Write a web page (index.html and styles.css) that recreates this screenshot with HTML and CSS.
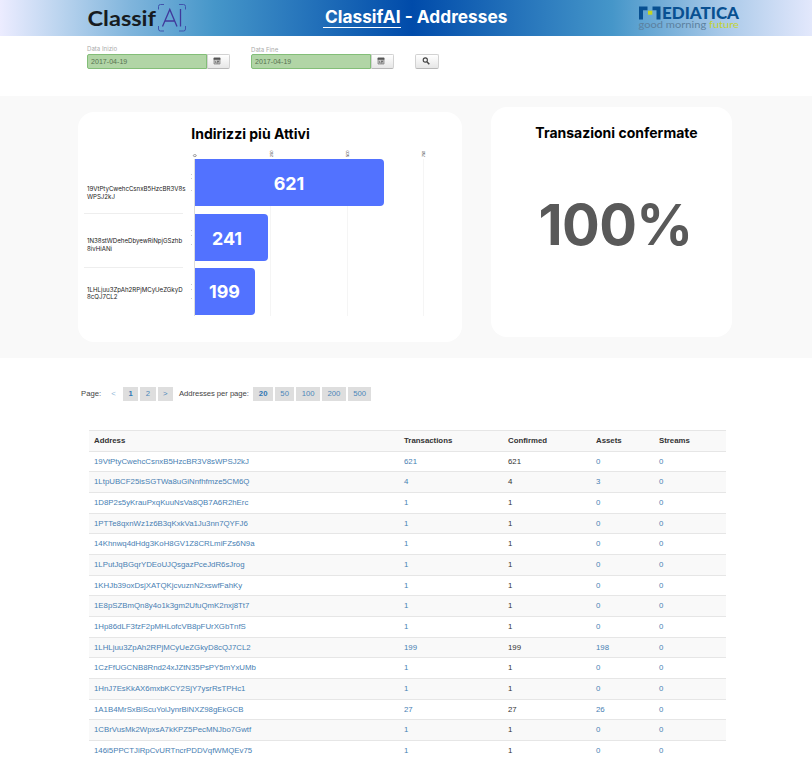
FILE: index.html
```html
<!DOCTYPE html>
<html lang="it">
<head>
<meta charset="utf-8">
<title>ClassifAI - Addresses</title>
<link rel="stylesheet" href="styles.css">
</head>
<body>
<header class="topbar">
  <svg class="logo" width="102" height="36" viewBox="0 0 102 36" role="img" aria-label="ClassifAI">
    <text class="logo-word" x="0.500" y="26.200" textLength="68.500" lengthAdjust="spacingAndGlyphs">Classif</text>
    <g fill="none" stroke="#4054ad" stroke-width="1">
      <path d="M77 4.500h-3.500q-2 0-2 2v3M92 4.500h4.500q2 0 2 2v3M71.500 26v3q0 2 2 2H77M98.500 26v3q0 2-2 2H92"/>
      <path d="M75.500 26.500L82.800 9.500L90 26.500M77.800 21h10M93.500 9v17.500" stroke="#40399b" stroke-width="1.300"/>
    </g>
  </svg>
  <h1 class="page-title"><a href="#">ClassifAI</a> - Addresses</h1>
  <svg class="partner" width="106" height="36" viewBox="0 0 106 36" role="img" aria-label="Mediatica good morning future">
    <path d="M2 19.500V6.500H10.500V10.300H6V19.500ZM15.500 6.500H23.500V19.500H19.500V10.300H15.500Z" fill="#085091"/>
    <rect x="11" y="10.700" width="4.300" height="4" fill="#c5d51f"/>
    <text class="partner-word" x="25" y="19.300" textLength="77" lengthAdjust="spacingAndGlyphs">EDIATICA</text>
    <text class="partner-tag" x="1.500" y="27.500" textLength="100.500" lengthAdjust="spacingAndGlyphs">good morning <tspan class="lime">future</tspan></text>
  </svg>
</header>

<form class="filters">
  <div class="field">
    <label>Data Inizio</label>
    <div class="input-group"><span class="date">2017-04-19</span><span class="btn"><svg class="ico" viewBox="0 0 8 8"><path d="M1 1h6v6H1z" fill="#c5c5c5" stroke="#777" stroke-width=".7"/><path d="M.7 .7h6.600v2H.7zM2 4.500h1v1H2zM4 3.700h2v1H4zM3.500 5.400h2v.8h-2z" fill="#555"/></svg></span></div>
  </div>
  <div class="field second">
    <label>Data Fine</label>
    <div class="input-group"><span class="date">2017-04-19</span><span class="btn"><svg class="ico" viewBox="0 0 8 8"><path d="M1 1h6v6H1z" fill="#c5c5c5" stroke="#777" stroke-width=".7"/><path d="M.7 .7h6.600v2H.7zM2 4.500h1v1H2zM4 3.700h2v1H4zM3.500 5.400h2v.8h-2z" fill="#555"/></svg></span></div>
  </div>
  <span class="btn search"><svg class="ico" viewBox="0 0 8 8" fill="none" stroke="#444"><circle cx="3.300" cy="3" r="2.100" stroke-width="1.100"/><path d="M4.900 4.700l2.400 2.500" stroke-width="1.500"/></svg></span>
</form>

<section class="dashboard">
  <article class="card active-card">
    <h2>Indirizzi più Attivi</h2>
    <div class="chart">
      <ul class="labels">
        <li>19VtPtyCwehcCsnxB5HzcBR3V8s<br>WPSJ2kJ</li>
        <li>1N38stWDeheDbyewRiNpjGSzhb<br>8ivHiANi</li>
        <li>1LHLjuu3ZpAh2RPjMCyUeZGkyD<br>8cQJ7CL2</li>
      </ul>
      <div>
        <svg class="axis" width="236" height="9" viewBox="0 0 236 9">
          <ellipse cx="4.800" cy="5.600" rx="1.500" ry="1" fill="none" stroke="#777" stroke-width=".7"/>
          <g class="tick">
            <text transform="translate(83 7) rotate(-90)">250</text>
            <text transform="translate(159 7) rotate(-90)">500</text>
            <text transform="translate(234.500 7) rotate(-90)">750</text>
          </g>
        </svg>
        <div class="plot">
          <svg class="marks" width="4" height="157" viewBox="0 0 4 157"><path d="M1.500 15v1M1.500 19v1M1.500 31v1M1.500 71v1M1.500 76v1M1.500 85v1M1.500 125v1M1.500 130v1M1.500 139v1" stroke="#ccc"/></svg>
          <div class="bars">
            <div class="bar" style="width:189px">621</div>
            <div class="bar" style="width:73px"><span class="shift">241</span></div>
            <div class="bar" style="width:60px">199</div>
          </div>
        </div>
      </div>
    </div>
  </article>
  <article class="card confirm-card">
    <h2>Transazioni confermate</h2>
    <p class="big">100%</p>
  </article>
</section>

<nav class="pager">
  <span class="lbl page">Page:</span><a class="off">&lt;</a><a class="on n">1</a><a class="n">2</a><a class="n">&gt;</a>
  <span class="lbl per">Addresses per page:</span><a class="on t">20</a><a class="t">50</a><a class="h">100</a><a class="h">200</a><a class="h">500</a>
</nav>

<table class="addresses">
  <thead><tr><th class="c1">Address</th><th class="c2">Transactions</th><th class="c3">Confirmed</th><th class="c4">Assets</th><th>Streams</th></tr></thead>
  <tbody>
    <tr><td><a>19VtPtyCwehcCsnxB5HzcBR3V8sWPSJ2kJ</a></td><td><a>621</a></td><td>621</td><td><a>0</a></td><td><a>0</a></td></tr>
    <tr><td><a>1LtpUBCF25isSGTWa8uGiNnfhfmze5CM6Q</a></td><td><a>4</a></td><td>4</td><td><a>3</a></td><td><a>0</a></td></tr>
    <tr><td><a>1D8P2s5yKrauPxqKuuNsVa8QB7A6R2hErc</a></td><td><a>1</a></td><td>1</td><td><a>0</a></td><td><a>0</a></td></tr>
    <tr><td><a>1PTTe8qxnWz1z6B3qKxkVa1Ju3nn7QYFJ6</a></td><td><a>1</a></td><td>1</td><td><a>0</a></td><td><a>0</a></td></tr>
    <tr><td><a>14Khnwq4dHdg3KoH8GV1Z8CRLmiFZs6N9a</a></td><td><a>1</a></td><td>1</td><td><a>0</a></td><td><a>0</a></td></tr>
    <tr><td><a>1LPutJqBGqrYDEoUJQsgazPceJdR6sJrog</a></td><td><a>1</a></td><td>1</td><td><a>0</a></td><td><a>0</a></td></tr>
    <tr><td><a>1KHJb39oxDsjXATQKjcvuznN2xswfFahKy</a></td><td><a>1</a></td><td>1</td><td><a>0</a></td><td><a>0</a></td></tr>
    <tr><td><a>1E8pSZBmQn8y4o1k3gm2UfuQmK2nxj8Tt7</a></td><td><a>1</a></td><td>1</td><td><a>0</a></td><td><a>0</a></td></tr>
    <tr><td><a>1Hp86dLF3fzF2pMHLofcVB8pFUrXGbTnfS</a></td><td><a>1</a></td><td>1</td><td><a>0</a></td><td><a>0</a></td></tr>
    <tr><td><a>1LHLjuu3ZpAh2RPjMCyUeZGkyD8cQJ7CL2</a></td><td><a>199</a></td><td>199</td><td><a>198</a></td><td><a>0</a></td></tr>
    <tr><td><a>1CzFfUGCNB8Rnd24xJZtN35PsPY5mYxUMb</a></td><td><a>1</a></td><td>1</td><td><a>0</a></td><td><a>0</a></td></tr>
    <tr><td><a>1HnJ7EsKkAX6mxbKCY2SjY7ysrRsTPHc1</a></td><td><a>1</a></td><td>1</td><td><a>0</a></td><td><a>0</a></td></tr>
    <tr><td><a>1A1B4MrSxBiScuYoiJynrBiNXZ98gEkGCB</a></td><td><a>27</a></td><td>27</td><td><a>26</a></td><td><a>0</a></td></tr>
    <tr><td><a>1CBrVusMk2WpxsA7kKPZ5PecMNJbo7Gwtf</a></td><td><a>1</a></td><td>1</td><td><a>0</a></td><td><a>0</a></td></tr>
    <tr><td><a>146i5PPCTJiRpCvURTncrPDDVqfWMQEv75</a></td><td><a>1</a></td><td>1</td><td><a>0</a></td><td><a>0</a></td></tr>
  </tbody>
</table>
</body>
</html>
```
FILE: styles.css
```css
* { box-sizing: border-box; }
body {
  margin: 0;
  width: 812px;
  height: 757px;
  overflow: hidden;
  background: #fff;
  font-family: "Liberation Sans", Arial, sans-serif;
  font-optical-sizing: none;
  color: #333;
}
.topbar {
  display: flex;
  height: 36px;
  padding-left: 87px;
  background: linear-gradient(90deg, #ececff 0, #b9d3ee 62px, #80b5dc 130px, #4596c9 215px, #004baa 412px, #4596c9 612px, #a7c8e8 720px, #e3e8fc 812px);
}
.logo { flex: none; }
.logo-word { font: 700 21px Lato, sans-serif; fill: #171b20; }
.page-title {
  width: 220px;
  margin: 0 0 0 134px;
  font: 700 17.300px/34px Inter, sans-serif;
  color: #fff;
  white-space: nowrap;
}
.page-title a { padding-left: 2px; color: inherit; text-decoration: none; border-bottom: 1.300px solid #fff; }
.partner { flex: none; margin-left: 94px; }
.partner-word { font: 900 17px Lato, sans-serif; fill: #085091; }
.partner-tag { font: 400 9.500px Lato, sans-serif; fill: #5c819f; }
.lime { fill: #c3d236; }

.filters { display: flex; height: 60px; padding: 9px 0 0 87px; }
.field { width: 143px; }
.field.second { margin-left: 21px; }
.field label { display: block; height: 9px; font: 400 6.100px/8px Inter, sans-serif; color: #aaa; }
.field.second label { padding-top: 1px; }
.input-group { display: flex; }
.date {
  width: 120px;
  height: 15px;
  border: 1px solid #83be78;
  border-radius: 2px 0 0 2px;
  padding-left: 3px;
  background: #b1d5a6;
  font: 400 7px/13px "Liberation Sans", Arial, sans-serif;
  letter-spacing: .05px;
  color: #56724f;
}
.btn {
  display: flex;
  align-items: center;
  justify-content: center;
  width: 23px;
  height: 15px;
  border: 1px solid #d2d2d2;
  border-bottom-color: #b8b8b8;
  border-radius: 0 2px 2px 0;
  padding: 0 3px 1px 0;
  background: linear-gradient(#fff, #e6e6e6);
}
.btn.search { width: 24px; margin: 9px 0 0 21px; border-radius: 2px; }
.ico { width: 8px; height: 8px; }

.dashboard { display: flex; align-items: flex-start; height: 262px; padding: 11px 0 0 78px; background: #f9f9f9; }
.card { background: #fff; border-radius: 16px; }
.card h2 { margin: 0; font: 700 14px/18px Inter, sans-serif; color: #000; text-align: center; white-space: nowrap; }
.active-card { width: 384px; height: 230px; margin-top: 5px; padding-top: 13px; }
.active-card h2 { padding-right: 39px; }
.confirm-card { width: 241px; height: 230px; margin-left: 29px; padding-top: 17px; }
.confirm-card h2 { padding-left: 10px; }
.big { margin: 45px 0 0 8px; font: 700 56px/77px Inter, sans-serif; letter-spacing: -.6px; color: #595959; text-align: center; }

.chart { display: grid; grid-template-columns: 106px 1fr; padding: 7px 0 0 6px; }
.labels { list-style: none; margin: 0; padding: 10px 7px 0 0; font: 400 6.120px/7.500px Inter, sans-serif; color: #222; white-space: nowrap; }
.labels li { height: 54px; padding: 25px 0 0 3px; border-bottom: 1px solid #eee; }
.labels li:nth-child(2) { padding-top: 23px; }
.labels li:last-child { padding-top: 17.500px; border: 0; }
.axis { display: block; }
.tick text { font: 400 3.500px Inter, sans-serif; fill: #333; }
.plot { display: flex; height: 157px; }
.marks { flex: none; }
.bars {
  display: flex;
  flex-direction: column;
  gap: 7.500px;
  width: 230px;
  border-left: 1px solid #ddd;
  background:
    linear-gradient(#f5f5f5, #f5f5f5) 75px 0 / 1px 100% no-repeat,
    linear-gradient(#f5f5f5, #f5f5f5) 152px 0 / 1px 100% no-repeat,
    linear-gradient(#f5f5f5, #f5f5f5) 228px 0 / 1px 100% no-repeat;
}
.bar { height: 47px; border-radius: 0 4px 4px 0; padding-right: 1px; background: #5272ff; color: #fff; font: 700 17.900px/50px Inter, sans-serif; text-align: center; }
.bar:last-child { line-height: 47px; }
.shift { padding-right: 8px; }

.pager { display: flex; padding: 29px 0 0 81px; height: 72px; font-size: 7.700px; line-height: 14px; }
.pager a { height: 14px; margin-right: 2px; background: #dedede; color: #4c87b9; text-align: center; }
.pager .n { width: 15.300px; }
.pager .t { width: 19.500px; }
.pager .h { width: 23.700px; }
.pager .on { color: #3077b3; font-weight: 700; }
.pager .off { width: 15px; background: none; color: #8fb6d6; }
.lbl { white-space: nowrap; color: #444; }
.lbl.page { width: 25px; }
.lbl.per { width: 78.500px; padding-left: 4px; letter-spacing: -.05px; }

.addresses { width: 637px; margin-left: 89px; border-collapse: collapse; table-layout: fixed; font-size: 7.840px; }
.addresses th, .addresses td { height: 20.680px; padding: 0 0 0 5px; border-top: 1px solid #e6e6e6; line-height: 12px; text-align: left; white-space: nowrap; }
.addresses th { background: #f9f9f9; color: #333; }
.addresses tbody tr:nth-child(even) { background: #f9f9f9; }
.addresses a { color: #4880b3; }
.c1 { width: 310px; }
.c2 { width: 104px; }
.c3 { width: 88px; }
.c4 { width: 63px; }
```
